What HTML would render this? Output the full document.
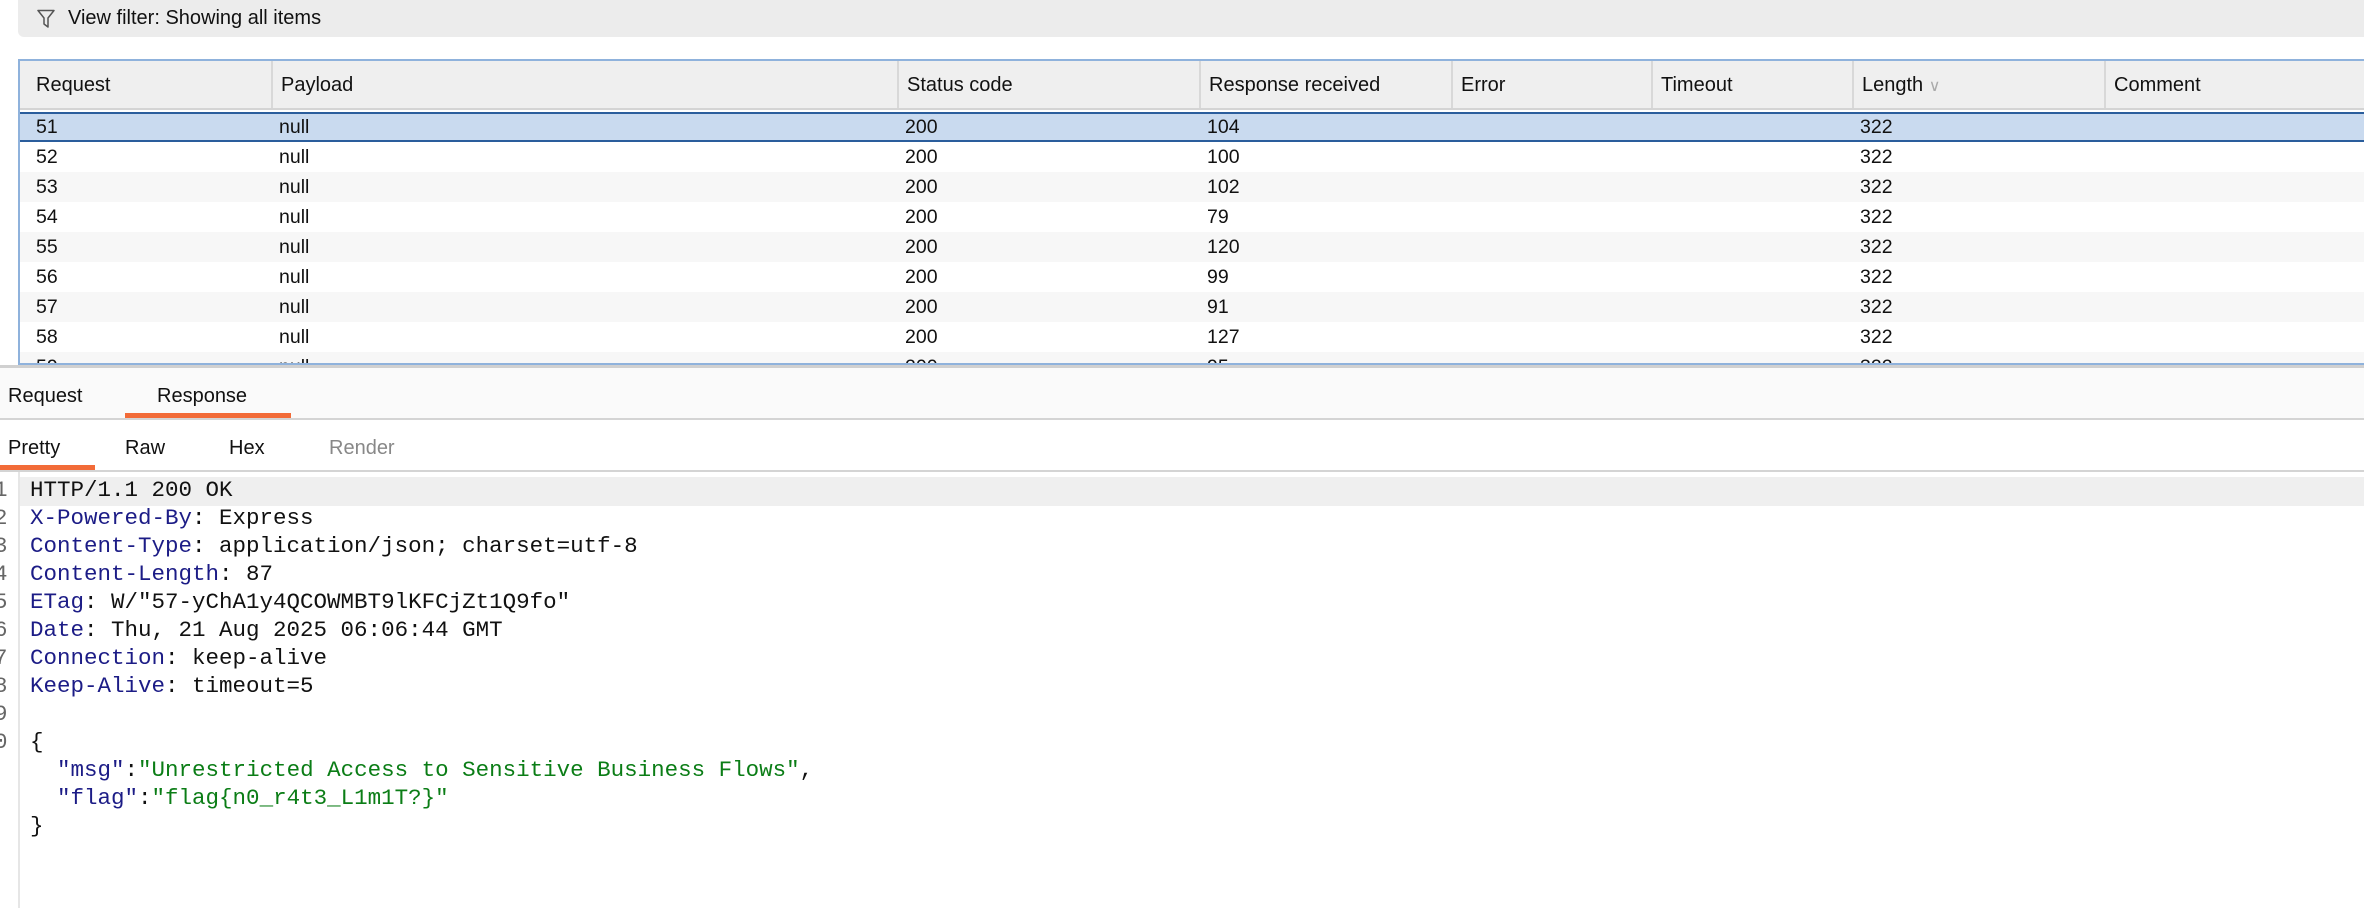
<!DOCTYPE html>
<html><head><meta charset="utf-8"><style>
*{margin:0;padding:0;box-sizing:border-box}
body{width:2364px;height:908px;overflow:hidden;background:#fff;font-family:"Liberation Sans",sans-serif;color:#111;position:relative}
.abs{position:absolute}
#filter{left:18px;top:0;width:2360px;height:37px;background:#ececec;border-radius:0 0 6px 6px;font-size:20px;line-height:37px;padding-left:50px}
#table{left:18px;top:59px;width:2360px;height:306px;border:2px solid #8fb2dc;border-right:none;overflow:hidden;background:#fff}
.row{position:absolute;left:0;width:2360px;height:30px;font-size:19.5px;line-height:30px}
.hdr{top:0;height:49px;background:#efefef;line-height:49px;font-size:20px;border-bottom:2px solid #d4d4d4}
.c{position:absolute;top:0;height:100%;padding-left:8px;white-space:nowrap}
.hdr .c{border-left:2px solid #d8d8d8}
.hdr .c:first-child{border-left:none}
.sel{background:#c9daef;border-top:2px solid #2a5d9c;border-bottom:2px solid #2a5d9c;line-height:26px}
.alt{background:#f7f7f7}
.mono{font-family:"Liberation Mono","DejaVu Sans Mono",monospace;font-size:22.5px}
.k{color:#1c1c86}.g{color:#0b7d16}
</style></head><body>
<div id="filter" class="abs">
<svg class="abs" style="left:19px;top:9px" width="18" height="20" viewBox="0 0 18 20"><path d="M1 1.5H17L11 9V18L7 15V9Z" fill="none" stroke="#555" stroke-width="1.5" stroke-linejoin="round"/></svg>
View filter: Showing all items</div>

<div id="table" class="abs">
<div class="row hdr">
<div class="c" style="left:0;padding-left:16px">Request</div>
<div class="c" style="left:251px">Payload</div>
<div class="c" style="left:877px">Status code</div>
<div class="c" style="left:1179px">Response received</div>
<div class="c" style="left:1431px">Error</div>
<div class="c" style="left:1631px">Timeout</div>
<div class="c" style="left:1832px">Length <span style="color:#aaa;font-size:16px">&#8744;</span></div>
<div class="c" style="left:2084px">Comment</div>
</div>
<div id="rows"></div>
</div>

<div class="abs" style="left:0;top:365px;width:2364px;height:3px;background:#d0d0d0"></div>
<div class="abs" style="left:0;top:368px;width:2364px;height:50px;background:#fafafa;font-size:20px;line-height:56px">
<span class="abs" style="left:8px">Request</span><span class="abs" style="left:157px">Response</span></div>
<div class="abs" style="left:125px;top:413px;width:166px;height:5px;background:#f26b38"></div>
<div class="abs" style="left:0;top:418px;width:2364px;height:2px;background:#d4d4d4"></div>
<div class="abs" style="left:0;top:420px;width:2364px;height:49px;background:#fff;font-size:20px;line-height:56px">
<span class="abs" style="left:8px">Pretty</span><span class="abs" style="left:125px">Raw</span><span class="abs" style="left:229px">Hex</span><span class="abs" style="left:329px;color:#888">Render</span></div>
<div class="abs" style="left:0;top:465px;width:95px;height:5px;background:#f26b38"></div>
<div class="abs" style="left:0;top:470px;width:2364px;height:2px;background:#d4d4d4"></div>
<div class="abs" style="left:18px;top:472px;width:2px;height:436px;background:#e6e6e6"></div>
<div class="abs" style="left:20px;top:477px;width:2344px;height:29px;background:#efefef"></div>
<div id="code" class="abs mono" style="left:0;top:476px;width:2364px"></div>
<script>
var d=[["51","104"],["52","100"],["53","102"],["54","79"],["55","120"],["56","99"],["57","91"],["58","127"],["59","95"]];
var h="";d.forEach(function(r,i){var cls=i==0?"row sel":(i%2==0?"row alt":"row");
h+='<div class="'+cls+'" style="top:'+(51+i*30)+'px"><div class="c" style="left:0;padding-left:16px">'+r[0]+'</div><div class="c" style="left:251px">null</div><div class="c" style="left:877px">200</div><div class="c" style="left:1179px">'+r[1]+'</div><div class="c" style="left:1832px">322</div></div>';});
document.getElementById("rows").innerHTML=h;
var L=['HTTP/1.1 200 OK','<span class="k">X-Powered-By</span>: Express','<span class="k">Content-Type</span>: application/json; charset=utf-8','<span class="k">Content-Length</span>: 87','<span class="k">ETag</span>: W/"57-yChA1y4QCOWMBT9lKFCjZt1Q9fo"','<span class="k">Date</span>: Thu, 21 Aug 2025 06:06:44 GMT','<span class="k">Connection</span>: keep-alive','<span class="k">Keep-Alive</span>: timeout=5','','{','  <span class="k">"msg"</span>:<span class="g">"Unrestricted Access to Sensitive Business Flows"</span>,','  <span class="k">"flag"</span>:<span class="g">"flag{n0_r4t3_L1m1T?}"</span>','}'];
var c="";L.forEach(function(t,i){c+='<div style="position:absolute;top:'+(i*28)+'px;height:28px;line-height:28px;width:2364px;white-space:pre"><span style="position:absolute;left:-6px;color:#666">'+(i<9?i+1:(i==9?"0":""))+'</span><span style="position:absolute;left:30px">'+t+'</span></div>';});
document.getElementById("code").innerHTML=c;
</script>
</body></html>
